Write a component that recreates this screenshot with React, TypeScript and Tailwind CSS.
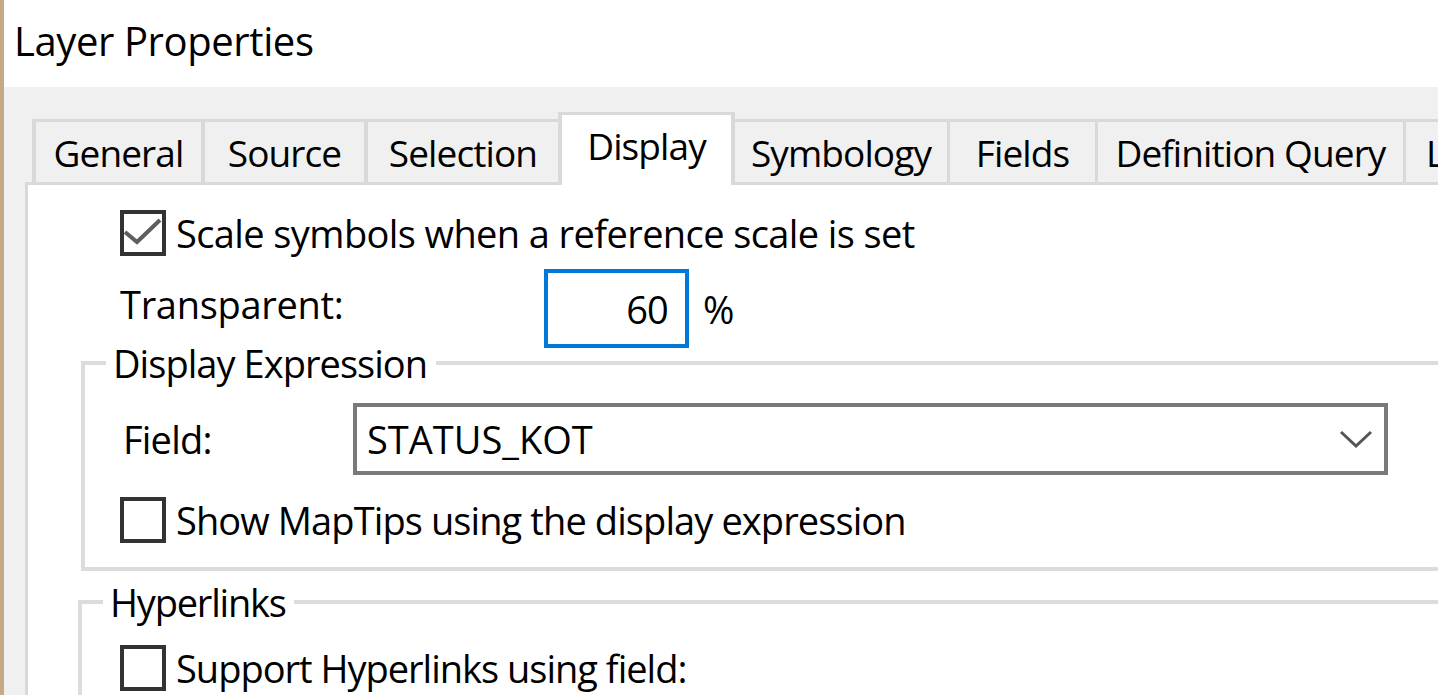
import { ReactNode } from "react";

const tabs = [
  { label: "General", w: "w-[169px]", side: "l" },
  { label: "Source", w: "w-[163px]", side: "l" },
  { label: "Selection", w: "w-[194px]", side: "l" },
  { label: "Display", w: "w-[177px]", side: "sel" },
  { label: "Symbology", w: "w-[215px]", side: "r" },
  { label: "Fields", w: "w-[148px]", side: "r" },
  { label: "Definition Query", w: "w-[308px]", side: "r" },
];

function CheckBox({ checked }: { checked?: boolean }) {
  return (
    <div className="w-[46px] h-[46px] shrink-0 border-[4px] border-[#333333] bg-white">
      {checked && (
        <svg width="38" height="38" viewBox="0 0 38 38">
          <path d="M1 18 L13 28 L36 6" fill="none" stroke="#5e5e5e" strokeWidth="4" />
        </svg>
      )}
    </div>
  );
}

function CheckRow({ checked, children }: { checked?: boolean; children: ReactNode }) {
  return (
    <div className="flex items-center gap-[10px]">
      <CheckBox checked={checked} />
      <span className="leading-none">{children}</span>
    </div>
  );
}

export default function App() {
  return (
    <div className="w-[1438px] h-[695px] overflow-hidden flex bg-[#f0f0f0] text-black text-[38px] tracking-[-0.8px] font-['Open_Sans','Noto_Sans',sans-serif]">
      <div className="w-[4px] shrink-0 bg-[#c6a886]" />
      <div className="flex-1 min-w-0 flex flex-col">
        <div className="h-[87px] shrink-0 bg-white flex items-center pl-[10px] pb-[6px]">
          <span className="leading-none text-[40px] tracking-[-0.4px]">Layer Properties</span>
        </div>

        <div className="flex-1 min-h-0 flex flex-col pl-[21px] pt-[25px]">
          {/* tab strip */}
          <div className="h-[70px] shrink-0 flex items-start ml-[7px] text-[37px] tracking-[-0.9px]">
            {tabs.map((t) =>
              t.side === "sel" ? (
                <div
                  key={t.label}
                  className={`${t.w} shrink-0 h-[73px] relative z-10 bg-white border-t-[3px] border-x-[4px] border-[#d9d9d9] flex items-center justify-center pb-[10px]`}
                >
                  <span className="leading-none">{t.label}</span>
                </div>
              ) : (
                <div
                  key={t.label}
                  className={`${t.w} shrink-0 h-[63px] mt-[7px] border-t-[3px] ${
                    t.side === "l" ? "border-l-[4px]" : "border-r-[3px]"
                  } border-[#d9d9d9] flex items-center justify-center`}
                >
                  <span className="leading-none">{t.label}</span>
                </div>
              )
            )}
            {/* next tab, only its first letter fits */}
            <div className="w-[40px] shrink-0 h-[63px] mt-[7px] border-t-[3px] border-[#d9d9d9] flex items-center pl-[20px] overflow-hidden">
              <span className="leading-none">L</span>
            </div>
          </div>

          {/* page */}
          <div className="flex-1 min-h-0 overflow-hidden bg-white border-t-[3px] border-l-[3px] border-[#d9d9d9] flex flex-col pt-[25px]">
            <div className="pl-[92px]">
              <CheckRow checked>
                <span className="tracking-[-0.6px]">Scale symbols when a reference scale is set</span>
              </CheckRow>
            </div>

            <div className="pl-[92px] mt-[13px] flex items-center">
              <span className="w-[424px] leading-none pb-[10px] tracking-[-0.3px]">Transparent:</span>
              <div className="w-[145px] h-[79px] border-[4px] border-[#0078d7] flex items-center justify-end pr-[17px]">
                <span className="leading-none">60</span>
              </div>
              <span className="ml-[14px] leading-none">%</span>
            </div>

            <fieldset className="ml-[53px] mt-[-4px] w-[1400px] shrink-0 border-[4px] border-[#dcdcdc] pb-[24px]">
              <legend className="ml-[21px] pl-[7px] pr-[9px] leading-[38px] tracking-[-0.95px]">Display Expression</legend>
              <div className="flex items-center mt-[21px]">
                <span className="w-[268px] pl-[38px] leading-none">Field:</span>
                <div className="w-[1035px] h-[72px] border-[4px] border-[#7a7a7a] flex items-center pl-[10px] pr-[11px]">
                  <span className="flex-1 leading-none tracking-normal">STATUS_KOT</span>
                  <svg width="34" height="20" viewBox="0 0 34 20">
                    <path d="M2 3 L17 17 L32 3" fill="none" stroke="#555555" strokeWidth="3" />
                  </svg>
                </div>
              </div>
              <div className="pl-[35px] mt-[22px]">
                <CheckRow>
                  <span className="tracking-[-0.9px]">Show MapTips using the display expression</span>
                </CheckRow>
              </div>
            </fieldset>

            <fieldset className="ml-[50px] mt-[12px] w-[1400px] shrink-0 border-[4px] border-[#dcdcdc] pb-[24px]">
              <legend className="ml-[21px] pl-[7px] pr-[8px] leading-[38px] tracking-[-1.2px]">Hyperlinks</legend>
              <div className="pl-[38px] mt-[24px]">
                <CheckRow>
                  <span className="tracking-[-1px]">Support Hyperlinks using field:</span>
                </CheckRow>
              </div>
            </fieldset>
          </div>
        </div>
      </div>
    </div>
  );
}
